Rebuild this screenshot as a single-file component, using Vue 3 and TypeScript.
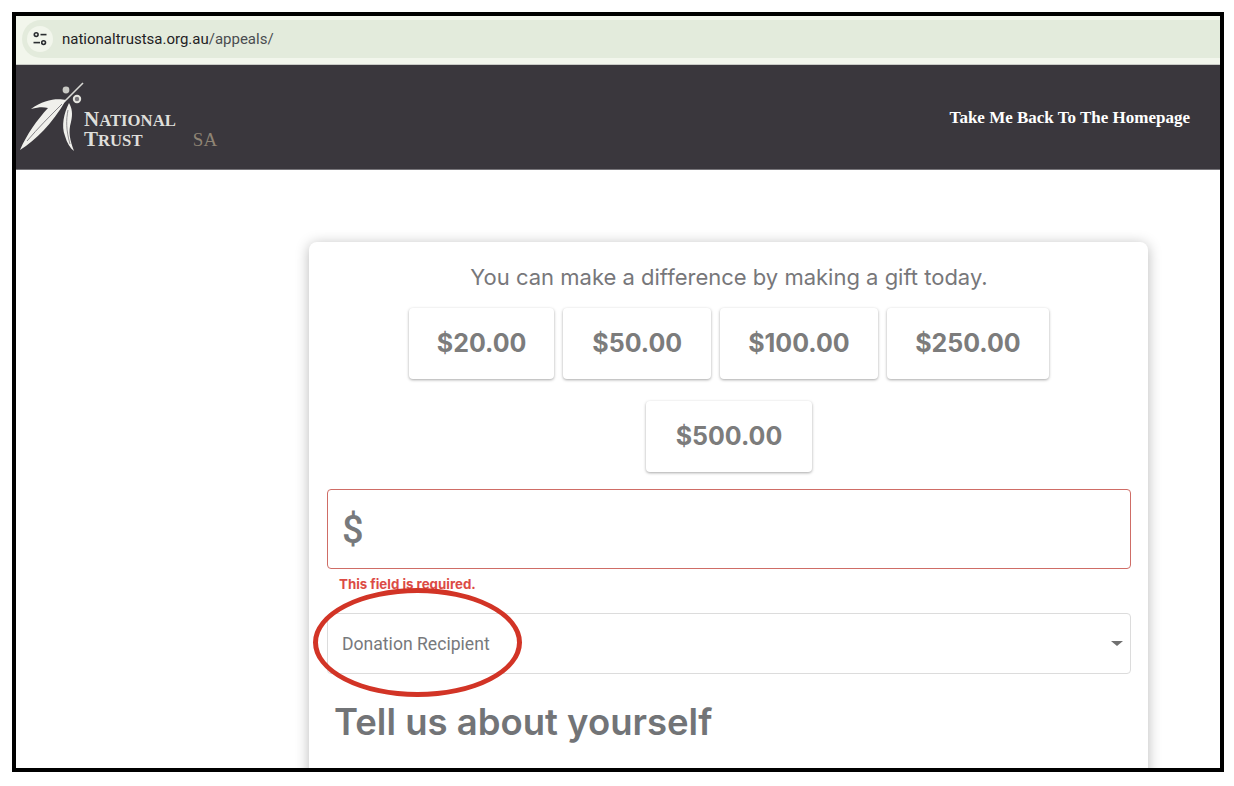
<script setup lang="ts">
const amounts: string[] = ['$20.00', '$50.00', '$100.00', '$250.00', '$500.00']
</script>

<template>
  <div class="frame">
    <div class="browser">
      <div class="pill">
        <span class="tune">
          <svg width="16" height="16" viewBox="0 0 16 16" fill="none" stroke="#2b2e31" stroke-width="1.6">
            <circle cx="4.2" cy="3.6" r="1.9" />
            <path d="M8.5 3.6H14.5" />
            <path d="M1.5 11.6H8" />
            <circle cx="11.6" cy="11.6" r="1.9" />
          </svg>
        </span>
        <span class="url">nationaltrustsa.org.au<span class="path">/appeals/</span></span>
      </div>
    </div>
    <header class="site">
      <div class="logo">
        <svg class="leaf" width="66" height="80" viewBox="0 0 66 80">
          <path d="M48 24 L67 5" stroke="#d8d8d4" stroke-width="1.6" fill="none" />
          <circle cx="50" cy="12" r="3.4" fill="#c9c9c4" />
          <circle cx="61" cy="21" r="3.2" fill="#77757a" stroke="#e4e4de" stroke-width="2" />
          <path d="M50 22 C42 20 28 21 15 31 C23 29 27 29 32 30 C21 42 11 56 4 72 C20 62 36 46 50 22 Z" fill="#f0f0ec" />
          <path d="M46 26 C34 38 22 50 11 63" stroke="#77757a" stroke-width="0.9" fill="none" />
          <path d="M53 25 C48 35 45 48 49 58 C51 65 54 70 58 73 C54 62 52 54 55 44 C57 36 56 30 53 25 Z" fill="#f0f0ec" />
          <path d="M52 32 C50 42 50 52 54 66" stroke="#77757a" stroke-width="0.8" fill="none" />
        </svg>
        <div class="wordmark">
          <span class="line">N<small>ATIONAL</small></span>
          <span class="line">T<small>RUST</small></span>
        </div>
        <span class="sa">SA</span>
      </div>
      <a class="back">Take Me Back To The Homepage</a>
    </header>
    <main class="page">
      <section class="card">
        <p class="lead">You can make a difference by making a gift today.</p>
        <div class="amounts">
          <button v-for="a in amounts" :key="a" class="amount" type="button">{{ a }}</button>
        </div>
        <div class="field-amount">
          <span class="dollar">$</span>
        </div>
        <p class="error">This field is required.</p>
        <div class="select">
          <span>Donation Recipient</span>
          <i class="caret"></i>
        </div>
        <h2 class="title">Tell us about yourself</h2>
      </section>
    </main>
    <div class="ring"></div>
  </div>
</template>

<style>
html, body { margin: 0; background: #fff; overflow: hidden; }
</style>

<style scoped>
.frame {
  position: relative;
  box-sizing: border-box;
  width: 1212px;
  height: 760px;
  margin: 12px 0 0 12px;
  border: 4px solid #000;
  overflow: hidden;
  background: #fff;
  display: flex;
  flex-direction: column;
}
.browser {
  flex: none;
  height: 49px;
  box-sizing: border-box;
  padding: 4px 0 0 6px;
  background: #f2f6ec;
  border-bottom: 1px solid #c9cbc6;
}
.pill {
  height: 38px;
  background: #e3ebdc;
  border-radius: 19px 0 0 19px;
  display: flex;
  align-items: center;
  padding-left: 5px;
}
.tune {
  width: 26px;
  height: 26px;
  border-radius: 50%;
  background: #f2f6ec;
  display: flex;
  align-items: center;
  justify-content: center;
}
.url {
  margin-left: 9px;
  font: 15px "Roboto", sans-serif;
  color: #1f2124;
}
.path { color: #4a4d50; }
.site {
  flex: none;
  height: 105px;
  box-sizing: border-box;
  background: #3a373d;
  border-bottom: 1px solid #77757a;
  display: flex;
  align-items: flex-start;
  justify-content: space-between;
  padding-right: 30px;
}
.logo {
  display: flex;
  align-items: flex-start;
  padding-top: 13px;
}
.leaf { flex: none; overflow: visible; }
.wordmark {
  display: flex;
  flex-direction: column;
  margin-left: 2px;
  padding-top: 31px;
  font: 700 21px/20px "Liberation Serif", serif;
  color: #dededa;
}
.line { display: block; height: 20px; }
.wordmark small { font-size: 16.7px; }
.sa {
  margin: 52px 0 0 17px;
  font: 19px/20px "Liberation Serif", serif;
  color: #8f8474;
}
.back {
  margin-top: 41px;
  font: 700 17px/24px "Liberation Serif", serif;
  color: #fff;
}
.page {
  flex: 1;
  display: flex;
  justify-content: center;
  padding: 72px 72px 0 293px;
}
.card {
  width: 839px;
  height: 600px;
  flex: none;
  box-sizing: border-box;
  padding: 0 17px 0 18px;
  background: #fff;
  border-radius: 8px;
  box-shadow: 0 2px 14px rgba(0, 0, 0, 0.28);
}
.lead {
  margin: 22px 0 0;
  text-align: center;
  font: 400 22px/26px "Inter", sans-serif;
  color: #77777a;
}
.amounts {
  display: flex;
  flex-wrap: wrap;
  justify-content: center;
  gap: 22px 9px;
  margin-top: 18px;
  padding: 0 60px;
}
.amount {
  height: 71px;
  padding: 0 28px 2px;
  border: 0;
  border-radius: 4px;
  background: #fff;
  box-shadow: 0 1px 3px rgba(0, 0, 0, 0.35);
  font: 700 25px "Inter", sans-serif;
  color: #7c7c7c;
}
.amount:nth-child(2) { padding: 0 29px 2px; }
.amount:nth-child(4) { padding: 0 28.5px 2px; }
.amount:nth-child(5) { padding: 0 29.5px 2px; }
.field-amount {
  height: 80px;
  margin-top: 17px;
  box-sizing: border-box;
  border: 1px solid #cf6d66;
  border-radius: 4px;
  display: flex;
  align-items: center;
  padding: 2px 0 0 14px;
}
.dollar {
  font: 500 38px "Roboto", sans-serif;
  color: #77797c;
}
.error {
  margin: 7px 0 0 12px;
  font: 700 13.3px/16px "Inter", sans-serif;
  color: #dc4b45;
}
.select {
  height: 61px;
  margin-top: 21px;
  box-sizing: border-box;
  border: 1px solid #dcdcdc;
  border-radius: 4px;
  display: flex;
  align-items: center;
  justify-content: space-between;
  padding: 0 7px 0 14px;
  font: 17.6px "Roboto", sans-serif;
  color: #77797c;
}
.caret {
  width: 0;
  height: 0;
  border-left: 6px solid transparent;
  border-right: 6px solid transparent;
  border-top: 5px solid #707070;
}
.title {
  margin: 24px 0 0 7px;
  font: 600 36.5px/48px "Inter", sans-serif;
  color: #727477;
}
.ring {
  position: absolute;
  left: 297px;
  top: 572px;
  width: 209px;
  height: 109px;
  box-sizing: border-box;
  border: 5px solid #d23426;
  border-radius: 50%;
}
</style>
